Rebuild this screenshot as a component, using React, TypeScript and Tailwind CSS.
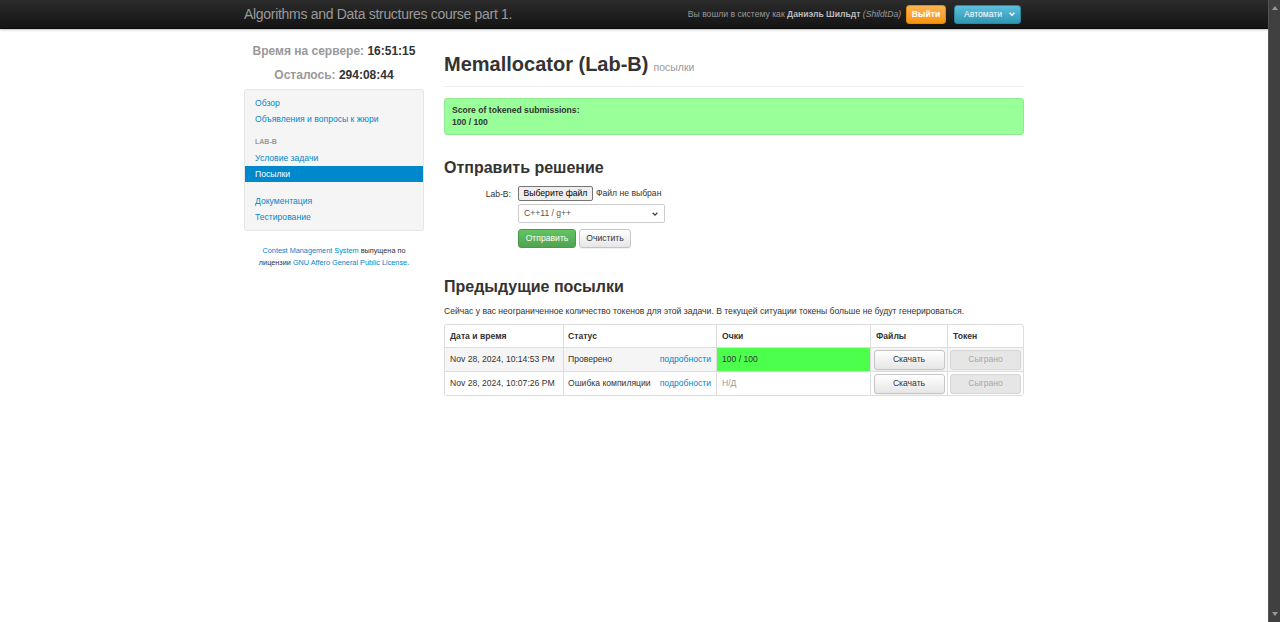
import React from 'react';

const font = { fontFamily: '"Liberation Sans", Arial, sans-serif' };

const Navbar: React.FC = () => (
  <div className="h-[29px] bg-gradient-to-b from-[#2c2c2c] to-[#141414] border-b border-[#0a0a0a] shadow-[0_1px_2px_rgba(0,0,0,0.25)]">
    <div className="w-[780px] mx-auto h-full flex items-center justify-between">
      <div className="text-[14px] tracking-[-0.3px] text-[#9a9a9a] leading-none">Algorithms and Data structures course part 1.</div>
      <div className="flex items-center mr-[3px]">
        <span className="text-[8.6px] text-[#999]">
          Вы вошли в систему как <b className="text-[#bbb]">Даниэль Шильдт</b> <i>(ShildtDa)</i>
        </span>
        <button className="ml-[5px] h-[19px] w-[40px] rounded-[3px] text-[8.6px] font-bold text-white bg-gradient-to-b from-[#fbb450] to-[#f89406] border border-[#e08a0c]">
          Выйти
        </button>
        <button className="ml-[8px] h-[19px] pl-[9px] pr-[4px] rounded-[3px] text-[8.6px] text-white bg-gradient-to-b from-[#5bc0de] to-[#2f96b4] border border-[#2a86a1] flex items-center">
          Автомати
          <svg className="ml-[6px]" width="8" height="8" viewBox="0 0 10 10">
            <path d="M2 3.5 L5 6.5 L8 3.5" stroke="white" strokeWidth="2" fill="none" />
          </svg>
        </button>
      </div>
    </div>
  </div>
);

const Sidebar: React.FC = () => (
  <div className="w-[180px] shrink-0">
    <div className="pt-[10px] text-center text-[12px] font-bold text-[#999] leading-[24px]">
      <div>Время на сервере: <span className="text-[#333]">16:51:15</span></div>
      <div>Осталось: <span className="text-[#333]">294:08:44</span></div>
    </div>
    <div className="mt-[2px] bg-[#f5f5f5] border border-[#e6e6e6] rounded-[3px] py-[5px] text-[8.6px] leading-[16px]">
      <div className="px-[10px] text-[#0088cc]">Обзор</div>
      <div className="px-[10px] text-[#0088cc]">Объявления и вопросы к жюри</div>
      <div className="px-[10px] pt-[7px] text-[7px] font-bold text-[#999] uppercase">Lab-B</div>
      <div className="px-[10px] text-[#0088cc]">Условие задачи</div>
      <div className="px-[10px] bg-[#0088cc] text-white">Посылки</div>
      <div className="h-[11px]" />
      <div className="px-[10px] text-[#0088cc]">Документация</div>
      <div className="px-[10px] text-[#0088cc]">Тестирование</div>
    </div>
    <div className="mt-[14px] text-center text-[7.3px] leading-[12px] text-[#333]">
      <span className="text-[#0088cc]">Contest Management System</span> выпущена по
      <br />
      лицензии <span className="text-[#0088cc]">GNU Affero General Public License</span>.
    </div>
  </div>
);

const GrayButton: React.FC<{ children: React.ReactNode; disabled?: boolean; className?: string }> = ({ children, disabled, className }) => (
  <button
    className={
      'h-[19px] rounded-[3px] border text-[8.6px] ' +
      (disabled
        ? 'bg-[#e6e6e6] border-[#d5d5d5] text-[#a8a8a8] '
        : 'bg-gradient-to-b from-white to-[#e6e6e6] border-[#c5c5c5] text-[#333] shadow-[0_1px_1px_rgba(0,0,0,0.06)] ') +
      (className || '')
    }
  >
    {children}
  </button>
);

const rows = [
  { date: 'Nov 28, 2024, 10:14:53 PM', status: 'Проверено', score: '100 / 100', ok: true },
  { date: 'Nov 28, 2024, 10:07:26 PM', status: 'Ошибка компиляции', score: 'Н/Д', ok: false },
];

const Main: React.FC = () => (
  <div className="w-[580px] ml-[20px]">
    <div className="pt-[21px] pb-[8px] border-b border-[#eee] flex items-baseline">
      <span className="text-[20px] font-bold text-[#333] leading-[28px]">Memallocator (Lab-B)</span>
      <span className="ml-[5px] text-[10.5px] text-[#999]">посылки</span>
    </div>
    <div className="mt-[11px] h-[37px] bg-[#99ff99] border border-[#8fe88f] rounded-[3px] px-[7px] pt-[5px] text-[8.6px] font-bold text-[#333] leading-[12px]">
      <div>Score of tokened submissions:</div>
      <div>100 / 100</div>
    </div>
    <div className="mt-[22px] text-[16px] font-bold text-[#333] leading-[22px]">Отправить решение</div>
    <div className="mt-[7px] flex">
      <div className="w-[74px] text-right pr-[7px] text-[8.6px] text-[#333] pt-[2px]">Lab-B:</div>
      <div className="flex flex-col">
        <div className="flex items-center h-[15px]">
          <button className="h-[15px] w-[75px] bg-[#efefef] border border-[#767676] rounded-[2px] text-[8.6px] text-black">Выберите файл</button>
          <span className="ml-[3px] text-[8.6px] text-[#333]">Файл не выбран</span>
        </div>
        <div className="mt-[3px] w-[147px] h-[19px] border border-[#ccc] rounded-[2px] bg-white flex items-center justify-between px-[5px] text-[8.6px] text-[#555]">
          <span>C++11 / g++</span>
          <svg width="8" height="8" viewBox="0 0 10 10">
            <path d="M2 3.5 L5 6.5 L8 3.5" stroke="#444" strokeWidth="1.6" fill="none" />
          </svg>
        </div>
        <div className="mt-[6px] flex">
          <button className="h-[19px] w-[58px] rounded-[3px] text-[8.6px] text-white bg-gradient-to-b from-[#62c462] to-[#51a351] border border-[#4a9a4a]">Отправить</button>
          <GrayButton className="ml-[3px] w-[52px]">Очистить</GrayButton>
        </div>
      </div>
    </div>
    <div className="mt-[28px] text-[16px] font-bold text-[#333] leading-[22px]">Предыдущие посылки</div>
    <div className="mt-[6px] text-[8.6px] text-[#333] leading-[14px]">
      Сейчас у вас неограниченное количество токенов для этой задачи. В текущей ситуации токены больше не будут генерироваться.
    </div>
    <table className="mt-[6px] w-full table-fixed border-separate border-spacing-0 border border-[#ddd] rounded-[3px] text-[8.6px] text-[#333]">
      <thead>
        <tr className="h-[22px]">
          <th className="w-[118px] text-left font-bold px-[5px]">Дата и время</th>
          <th className="w-[153px] text-left font-bold px-[4px] border-l border-[#ddd]">Статус</th>
          <th className="w-[154px] text-left font-bold px-[5px] border-l border-[#ddd]">Очки</th>
          <th className="w-[77px] text-left font-bold px-[5px] border-l border-[#ddd]">Файлы</th>
          <th className="text-left font-bold px-[5px] border-l border-[#ddd]">Токен</th>
        </tr>
      </thead>
      <tbody>
        {rows.map((r, i) => (
          <tr key={i} className={'h-[24px] ' + (i === 0 ? 'bg-[#f5f5f5]' : 'bg-white')}>
            <td className="px-[5px] border-t border-[#ddd] whitespace-nowrap">{r.date}</td>
            <td className="pl-[4px] pr-[5px] border-t border-l border-[#ddd]">
              <div className="flex justify-between whitespace-nowrap">
                <span>{r.status}</span>
                <span className="text-[#0088cc]">подробности</span>
              </div>
            </td>
            <td className={'px-[5px] border-t border-l border-[#ddd] ' + (r.ok ? 'bg-[#4dff4d] text-[#333]' : 'text-[#999]')}>{r.score}</td>
            <td className="px-[2px] border-t border-l border-[#ddd] text-center">
              <GrayButton className="w-[71px] h-[20px]">Скачать</GrayButton>
            </td>
            <td className="px-[2px] border-t border-l border-[#ddd] text-center">
              <GrayButton disabled className="w-[71px] h-[20px]">Сыграно</GrayButton>
            </td>
          </tr>
        ))}
      </tbody>
    </table>
  </div>
);

const Scrollbar: React.FC = () => (
  <div className="w-[12px] h-[622px] shrink-0 bg-neutral-700 border-l border-neutral-600 flex flex-col items-center justify-between py-[6px]">
    <svg width="6" height="4" viewBox="0 0 6 4"><path d="M0 4 L3 0 L6 4 Z" fill="#999" /></svg>
    <svg width="6" height="4" viewBox="0 0 6 4"><path d="M0 0 L3 4 L6 0 Z" fill="#999" /></svg>
  </div>
);

const App: React.FC = () => (
  <div className="flex h-[622px] overflow-hidden bg-white" style={font}>
    <div className="flex-1 min-w-0">
      <Navbar />
      <div className="w-[780px] mx-auto flex">
        <Sidebar />
        <Main />
      </div>
    </div>
    <Scrollbar />
  </div>
);

export default App;
